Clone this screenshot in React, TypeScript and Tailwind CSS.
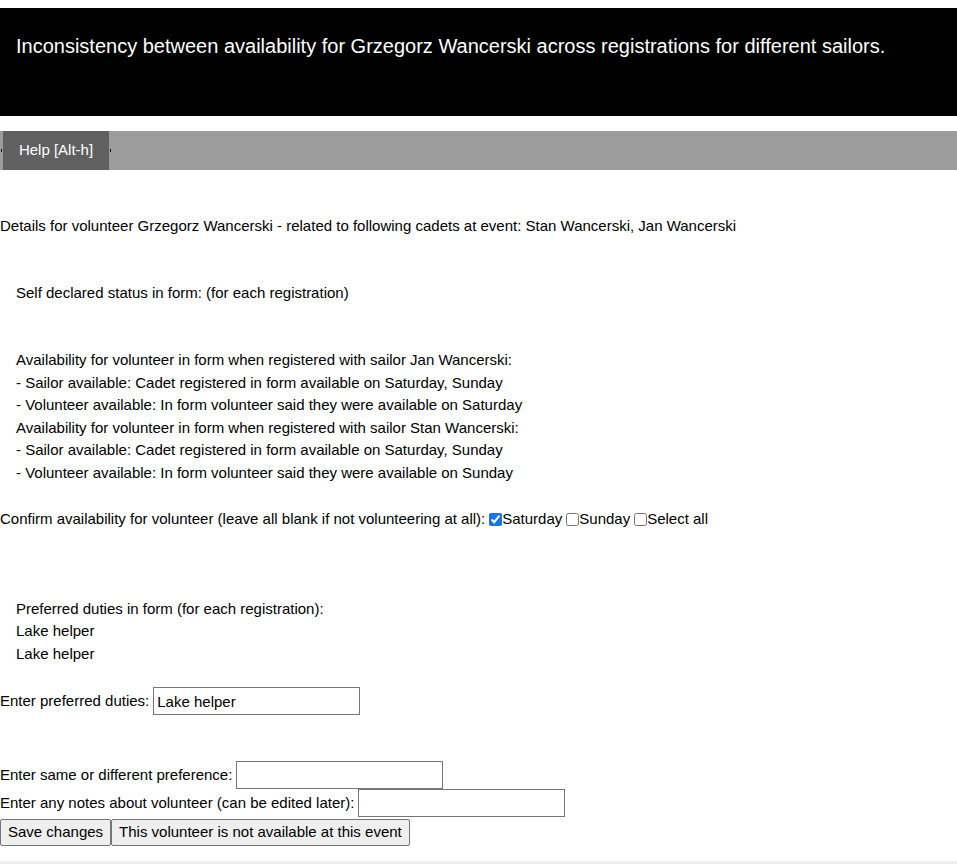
export default function App() {
  return (
    <div className="min-h-[864px] bg-white text-[15px] leading-[22.5px] text-black font-['Liberation_Sans',Arial,sans-serif]">
      <div className="pt-2">
        <div className="h-[108px] bg-black px-4 pt-[24px] text-[20px] leading-[28px] text-white">
          Inconsistency between availability for Grzegorz Wancerski across registrations for different sailors.
        </div>
      </div>

      <div className="mt-[15px] flex h-[39px] items-center bg-[#9c9c9c]">
        <span className="ml-[1px] h-[3px] w-[1px] self-center bg-black" />
        <div className="ml-[1px] flex h-full w-[106px] items-center justify-center bg-[#606060] text-white">
          Help [Alt-h]
        </div>
        <span className="ml-[1px] h-[3px] w-[1px] self-center bg-black" />
      </div>

      <div className="mt-[45px]">
        Details for volunteer Grzegorz Wancerski - related to following cadets at event: Stan Wancerski, Jan Wancerski
      </div>

      <div className="mt-[44px] pl-4">Self declared status in form: (for each registration)</div>

      <div className="mt-[45px] pl-4">
        <div>Availability for volunteer in form when registered with sailor Jan Wancerski:</div>
        <div>- Sailor available: Cadet registered in form available on Saturday, Sunday</div>
        <div>- Volunteer available: In form volunteer said they were available on Saturday</div>
        <div>Availability for volunteer in form when registered with sailor Stan Wancerski:</div>
        <div>- Sailor available: Cadet registered in form available on Saturday, Sunday</div>
        <div>- Volunteer available: In form volunteer said they were available on Sunday</div>
      </div>

      <div className="mt-[24px] flex items-center">
        <span>Confirm availability for volunteer (leave all blank if not volunteering at all):</span>
        <input type="checkbox" defaultChecked className="ml-[4px] h-[13px] w-[13px] accent-[#1a73e8]" />
        <span>Saturday</span>
        <input type="checkbox" className="ml-[4px] h-[13px] w-[13px]" />
        <span>Sunday</span>
        <input type="checkbox" className="ml-[4px] h-[13px] w-[13px]" />
        <span>Select all</span>
      </div>

      <div className="mt-[67px] pl-4">
        <div>Preferred duties in form (for each registration):</div>
        <div>Lake helper</div>
        <div>Lake helper</div>
      </div>

      <div className="mt-[22px] flex items-center">
        <span>Enter preferred duties:</span>
        <input
          type="text"
          defaultValue="Lake helper"
          className="ml-[4px] h-[28px] w-[207px] border border-[#767676] px-[3px] text-[15px] outline-none"
        />
      </div>

      <div className="mt-[46px] flex items-center">
        <span>Enter same or different preference:</span>
        <input type="text" className="ml-[4px] h-[28px] w-[207px] border border-[#767676] px-[3px] outline-none" />
      </div>
      <div className="flex items-center">
        <span>Enter any notes about volunteer (can be edited later):</span>
        <input type="text" className="ml-[4px] h-[28px] w-[207px] border border-[#767676] px-[3px] outline-none" />
      </div>

      <div className="mt-[2px] flex">
        <button className="h-[27px] rounded-[2px] border border-[#767676] bg-[#efefef] px-[7px] text-[15px]">
          Save changes
        </button>
        <button className="h-[27px] rounded-[2px] border border-[#767676] bg-[#efefef] px-[7px] text-[15px]">
          This volunteer is not available at this event
        </button>
      </div>

      <div className="mt-[15px] h-[3px] bg-[#eeeeee]" />
    </div>
  );
}
